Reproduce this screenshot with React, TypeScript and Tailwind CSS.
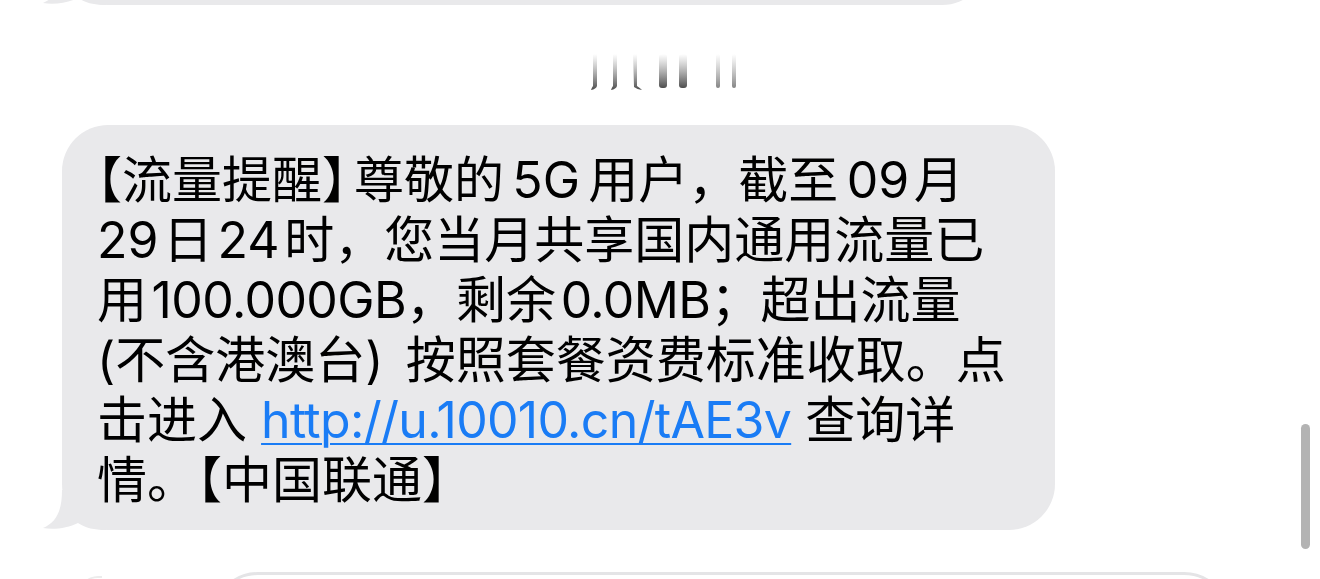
// narrow gaps that iOS leaves between Han characters and Latin/digits
const g = '\u2006';
const h = '\u200A';

// half-width brackets, as iOS sets them
const Open = () => <span className="[font-feature-settings:'halt']">【</span>;
const Close = () => <span className="mr-[7px] [font-feature-settings:'halt']">】</span>;

const lines: React.ReactNode[] = [
  <><Open />流量提醒<Close />尊敬的{g}5G{g}用户，截至{g}09{h}月</>,
  `29${h}日${h}24${h}时，您当月共享国内通用流量已`,
  <>用{h}<span className="tracking-[-0.6px]">100.000GB</span>，剩余{h}<span className="tracking-[-0.6px]">0.0MB</span>；超出流量</>,
  `(不含港澳台) ${g}按照套餐资费标准收取。点`,
  <>
    击进入{' '}
    <a className="text-[#1a7cf5] tracking-[-0.7px] underline decoration-2 underline-offset-[5px]">http://u.10010.cn/tAE3v</a>{' '}
    查询详
  </>,
  <>情。【中国联通<Close /></>,
];

const Tail = () => (
  <svg className="absolute -left-[20px] bottom-0" width="64" height="40" viewBox="0 0 64 40">
    <path d="M20 0 C20 20 15 32 1 38 C12 40 26 38 36 33 C44 38 52 40 64 40 L64 0 Z" fill="#e9e9eb" />
  </svg>
);

// the blurred timestamp, drawn as faded strokes
const Smudge = () => (
  <svg width="150" height="40" viewBox="0 0 150 40">
    <defs>
      <linearGradient id="fade" x1="0" y1="0" x2="0" y2="1">
        <stop offset="0" stopColor="#777" stopOpacity="0" />
        <stop offset="1" stopColor="#444" stopOpacity="0.95" />
      </linearGradient>
      <linearGradient id="fadeLight" x1="0" y1="0" x2="0" y2="1">
        <stop offset="0" stopColor="#888" stopOpacity="0" />
        <stop offset="1" stopColor="#666" stopOpacity="0.8" />
      </linearGradient>
    </defs>
    <path d="M4 2 h4 v32 q-1 3 -6 4 q1 -3 2 -4 z" fill="url(#fade)" />
    <path d="M24 2 h4 v32 q-1 3 -6 4 q1 -3 2 -4 z" fill="url(#fade)" />
    <path d="M44 2 h4 v32 q3 2 5 4 q-4 0 -8 -3 z" fill="url(#fade)" />
    <rect x="70" y="2" width="8" height="34" rx="3" fill="url(#fade)" />
    <rect x="90" y="2" width="8" height="34" rx="3" fill="url(#fade)" />
    <rect x="127" y="2" width="4" height="34" rx="2" fill="url(#fadeLight)" />
    <rect x="143" y="2" width="4" height="34" rx="2" fill="url(#fadeLight)" />
  </svg>
);

export default function App() {
  return (
    <div className="relative w-[1320px] h-[579px] overflow-hidden bg-white font-['Inter','Noto_Sans_CJK_SC',sans-serif]">
      {/* previous message, mostly scrolled off */}
      <div className="relative ml-[62px] -mt-[95px] w-[926px] h-[100px] rounded-[46px] bg-[#e9e9eb]">
        <Tail />
      </div>

      {/* timestamp */}
      <div className="h-[120px] pt-[47px] pl-[589px]">
        <Smudge />
      </div>

      {/* message */}
      <div className="relative ml-[62px] w-[993px] rounded-[46px] bg-[#e9e9eb] pl-[35px] pt-[25px] pb-[20px]">
        <Tail />
        <div className="relative text-[50px] leading-[60px] text-black whitespace-pre">
          {lines.map((l, i) => (
            <div key={i}>{l}</div>
          ))}
        </div>
      </div>

      {/* next message, just peeking in */}
      <div className="flex items-start mt-[42px]">
        <div className="ml-[78px] mt-[4px] w-[24px] h-[20px] rounded-tl-[20px] border-t-2 border-[#ececec]" />
        <div className="ml-[110px] w-[1018px] h-[200px] rounded-[46px] border-[3px] border-[#e4e4e6] bg-white" />
      </div>

      {/* scroll indicator */}
      <div className="absolute left-[1301px] top-[424px] w-[9px] h-[125px] rounded-full bg-[#b3b3b3]" />
    </div>
  );
}
